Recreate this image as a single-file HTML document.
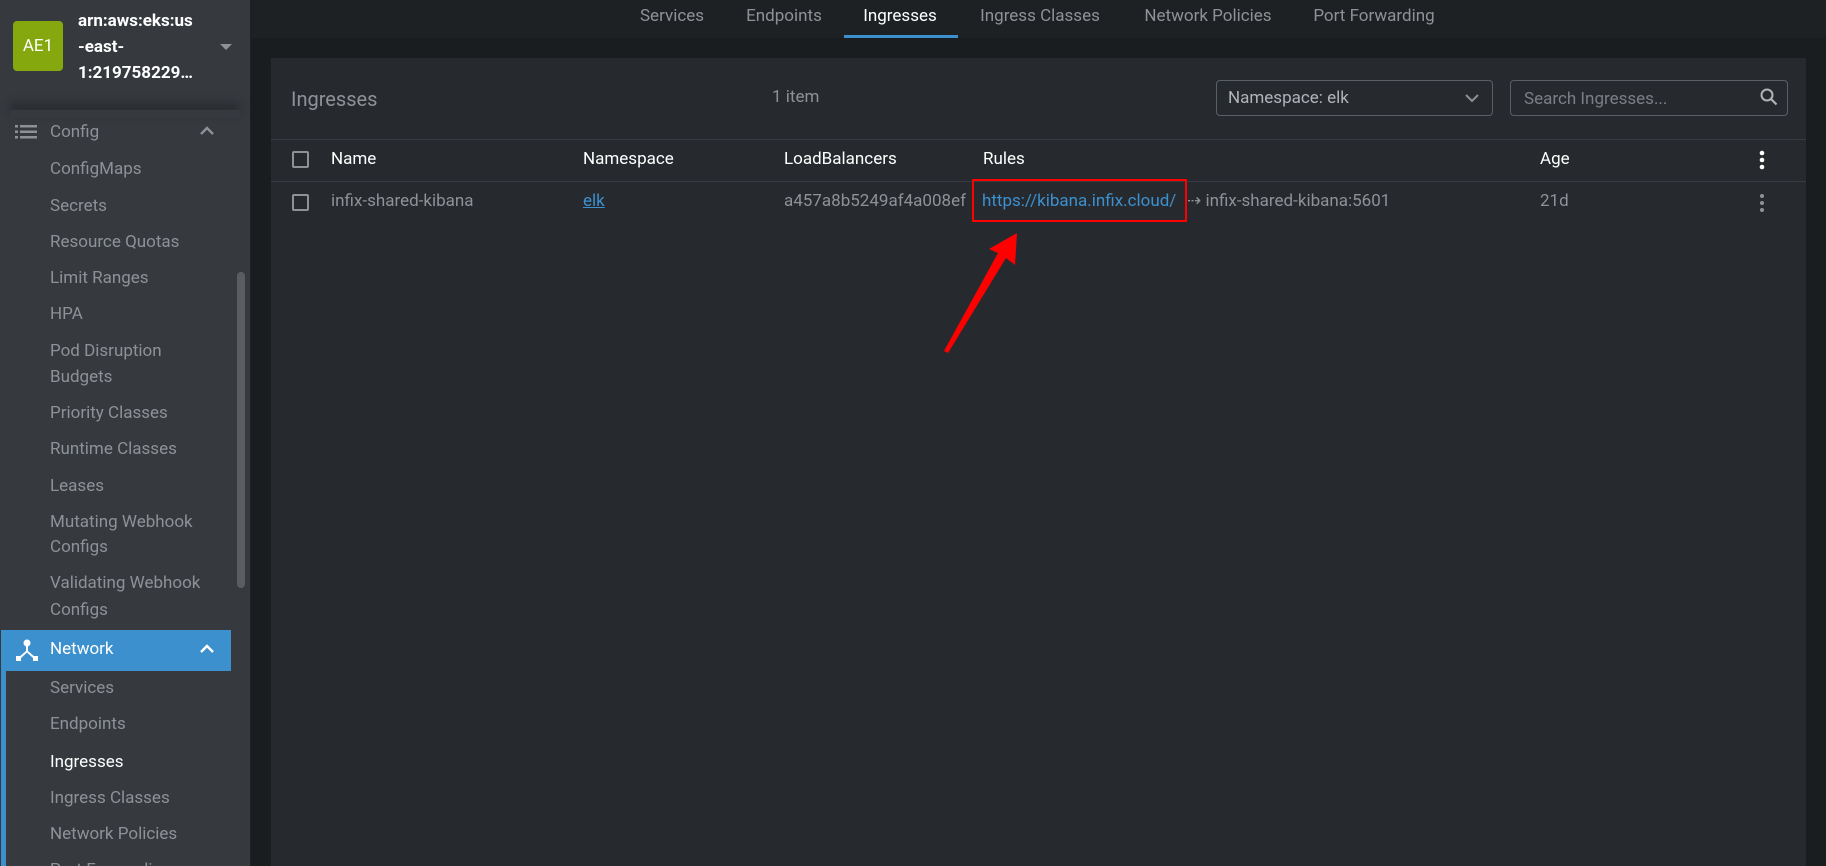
<!DOCTYPE html>
<html style="width:1826px;height:866px;overflow:hidden"><head><meta charset="utf-8"><style>
*{margin:0;padding:0;box-sizing:border-box}
html,body{width:1826px;height:866px;overflow:hidden}
body{background:#1e2124;font-family:"Roboto","Liberation Sans",sans-serif;position:relative;color:#8e9297}
.a{position:absolute;white-space:nowrap}
#side{position:absolute;left:0;top:0;width:250px;height:866px;background:#363a3f;overflow:hidden}
.si{position:absolute;left:50px;font-size:17px;color:#8e9297;transform:translateY(-50%)}
.tab{position:absolute;top:16px;font-size:17px;color:#8e9297;transform:translate(-50%,-50%)}
.th{font-size:17px;color:#fff;transform:translateY(-50%)}
.td{font-size:17px;color:#8e9297;transform:translateY(-50%)}
.cb{position:absolute;width:17px;height:17px;border:2px solid #8e9297;border-radius:2px}
</style></head><body>
<div id="side">
  <div class="a" style="left:13px;top:21px;width:50px;height:50px;background:#86a80f;border-radius:4px;color:#fff;font-size:17px;line-height:50px;text-align:center">AE1</div>
  <div class="a" style="left:78px;top:8px;color:#fff;font-weight:bold;font-size:17px;line-height:26px">arn:aws:eks:us<br>-east-<br>1:219758229…</div>
  <div class="a" style="left:220px;top:44px;border-left:6px solid transparent;border-right:6px solid transparent;border-top:6px solid #8e9297"></div>
  <div class="a" style="left:10px;top:110px;width:230px;height:8px;box-shadow:0 -6px 10px rgba(0,0,0,.35)"></div>
  <svg class="a" style="left:15px;top:124px" width="22" height="16" viewBox="0 0 22 16" fill="#8e9297"><rect x="0" y="1" width="3" height="2.5"/><rect x="5" y="1" width="17" height="2.5"/><rect x="0" y="6.5" width="3" height="2.5"/><rect x="5" y="6.5" width="17" height="2.5"/><rect x="0" y="12" width="3" height="2.5"/><rect x="5" y="12" width="17" height="2.5"/></svg>
  <div class="si" style="top:132px">Config</div>
  <svg class="a" style="left:200px;top:126px" width="14" height="10" viewBox="0 0 14 10"><path d="M1 8 L7 2 L13 8" stroke="#8e9297" stroke-width="2.4" fill="none"/></svg>
  <div class="si" style="top:169px">ConfigMaps</div>
  <div class="si" style="top:206px">Secrets</div>
  <div class="si" style="top:242px">Resource Quotas</div>
  <div class="si" style="top:278px">Limit Ranges</div>
  <div class="si" style="top:314px">HPA</div>
  <div class="si" style="top:351px">Pod Disruption</div>
  <div class="si" style="top:377px">Budgets</div>
  <div class="si" style="top:413px">Priority Classes</div>
  <div class="si" style="top:449px">Runtime Classes</div>
  <div class="si" style="top:486px">Leases</div>
  <div class="si" style="top:522px">Mutating Webhook</div>
  <div class="si" style="top:547px">Configs</div>
  <div class="si" style="top:583px">Validating Webhook</div>
  <div class="si" style="top:610px">Configs</div>
  <div class="a" style="left:237px;top:272px;width:8px;height:316px;background:#5a5d62;border-radius:4px"></div>
  <div class="a" style="left:1px;top:630px;width:230px;height:41px;background:#3d90ce"></div>
  <div class="a" style="left:1px;top:671px;width:5px;height:195px;background:#3d90ce"></div>
  <svg class="a" style="left:16px;top:639px" width="22" height="22" viewBox="0 0 22 22" fill="#fff"><circle cx="11" cy="4" r="3.5"/><path d="M10 7h2v5l7 6-1.5 1.5L11 13.5 4.5 19.5 3 18l7-6z"/><rect x="0" y="17" width="5" height="5"/><rect x="17" y="17" width="5" height="5"/></svg>
  <div class="si" style="top:649px;color:#fff">Network</div>
  <svg class="a" style="left:200px;top:644px" width="14" height="10" viewBox="0 0 14 10"><path d="M1 8 L7 2 L13 8" stroke="#fff" stroke-width="2.4" fill="none"/></svg>
  <div class="si" style="top:688px">Services</div>
  <div class="si" style="top:724px">Endpoints</div>
  <div class="si" style="top:762px;color:#fff">Ingresses</div>
  <div class="si" style="top:798px">Ingress Classes</div>
  <div class="si" style="top:834px">Network Policies</div>
  <div class="si" style="top:870px">Port Forwarding</div>
</div>
<div class="tab" style="left:672px">Services</div>
<div class="tab" style="left:784px">Endpoints</div>
<div class="tab" style="left:900px;color:#fff">Ingresses</div>
<div class="tab" style="left:1040px">Ingress Classes</div>
<div class="tab" style="left:1208px">Network Policies</div>
<div class="tab" style="left:1374px">Port Forwarding</div>
<div class="a" style="left:844px;top:35px;width:114px;height:3px;background:#3d90ce"></div>
<div class="a" style="left:251px;top:38px;width:1575px;height:828px;background:#1a1d20"></div>
<div class="a" style="left:271px;top:58px;width:1535px;height:808px;background:#262a2f"></div>
<div class="a" style="left:291px;top:99px;transform:translateY(-50%);font-size:20px;color:#8e9297">Ingresses</div>
<div class="a" style="left:772px;top:97px;transform:translateY(-50%);font-size:17px">1 item</div>
<div class="a" style="left:1216px;top:80px;width:277px;height:36px;border:1px solid #5a5f66;border-radius:4px"></div>
<div class="a" style="left:1228px;top:98px;transform:translateY(-50%);font-size:17px;color:#b0b4b9">Namespace: elk</div>
<svg class="a" style="left:1465px;top:93px" width="14" height="10" viewBox="0 0 14 10"><path d="M1 2 L7 8 L13 2" stroke="#8e9297" stroke-width="2" fill="none"/></svg>
<div class="a" style="left:1510px;top:80px;width:278px;height:36px;border:1px solid #5a5f66;border-radius:4px"></div>
<div class="a" style="left:1524px;top:99px;transform:translateY(-50%);font-size:17px;color:#7b7f85">Search Ingresses...</div>
<svg class="a" style="left:1760px;top:88px" width="18" height="18" viewBox="0 0 18 18"><circle cx="7" cy="7" r="5.5" stroke="#b0b4b9" stroke-width="2" fill="none"/><path d="M11 11 L16.5 16.5" stroke="#b0b4b9" stroke-width="2.2"/></svg>
<div class="a" style="left:271px;top:139px;width:1535px;height:1px;background:#383c42"></div>
<div class="a" style="left:271px;top:181px;width:1535px;height:1px;background:#383c42"></div>
<div class="cb" style="left:292px;top:151px"></div>
<div class="a th" style="left:331px;top:159px">Name</div>
<div class="a th" style="left:583px;top:159px">Namespace</div>
<div class="a th" style="left:784px;top:159px">LoadBalancers</div>
<div class="a th" style="left:983px;top:159px">Rules</div>
<div class="a th" style="left:1540px;top:159px">Age</div>
<svg class="a" style="left:1758px;top:150px" width="8" height="20" viewBox="0 0 8 20" fill="#fff"><circle cx="4" cy="3" r="2.3"/><circle cx="4" cy="10" r="2.3"/><circle cx="4" cy="17" r="2.3"/></svg>
<div class="cb" style="left:292px;top:194px"></div>
<div class="a td" style="left:331px;top:201px">infix-shared-kibana</div>
<div class="a td" style="left:583px;top:201px;color:#3d90ce;text-decoration:underline">elk</div>
<div class="a td" style="left:784px;top:201px;width:186px;overflow:hidden">a457a8b5249af4a008ef</div>
<div class="a td" style="left:982px;top:201px;color:#3d90ce">https://kibana.infix.cloud/</div>
<div class="a td" style="left:1187px;top:201px">⇢ infix-shared-kibana:5601</div>
<div class="a td" style="left:1540px;top:201px">21d</div>
<svg class="a" style="left:1758px;top:193px" width="8" height="20" viewBox="0 0 8 20" fill="#8e9297"><circle cx="4" cy="3" r="2"/><circle cx="4" cy="10" r="2"/><circle cx="4" cy="17" r="2"/></svg>
<div class="a" style="left:972px;top:179px;width:215px;height:43px;border:2px solid #f00"></div>
<svg class="a" style="left:930px;top:225px" width="100" height="130" viewBox="0 0 100 130"><path d="M14 126 L68 28 L59 24 L87 8 L85 40 L76 33 L18 128 Z" fill="#f00"/></svg>
</body></html>
